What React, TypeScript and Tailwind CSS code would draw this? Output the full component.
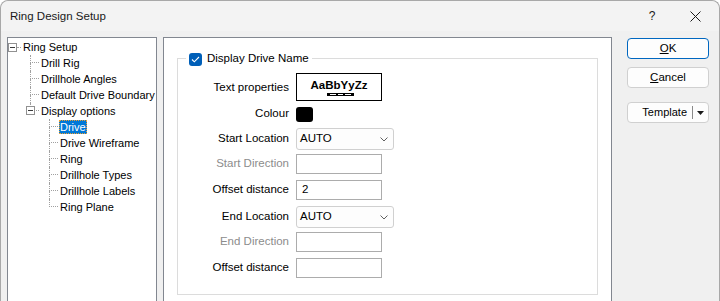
import React from "react";

type TreeItem = { label: string; level: number; last?: boolean; expander?: boolean; selected?: boolean };

const items: TreeItem[] = [
  { label: "Drill Rig", level: 1 },
  { label: "Drillhole Angles", level: 1 },
  { label: "Default Drive Boundary", level: 1 },
  { label: "Display options", level: 1, last: true, expander: true },
  { label: "Drive", level: 2, selected: true },
  { label: "Drive Wireframe", level: 2 },
  { label: "Ring", level: 2 },
  { label: "Drillhole Types", level: 2 },
  { label: "Drillhole Labels", level: 2 },
  { label: "Ring Plane", level: 2, last: true },
];

function Expander() {
  return (
    <div className="w-[9px] h-[9px] border border-[#919191] bg-white flex items-center justify-center">
      <div className="w-[5px] h-px bg-[#3a3a3a]" />
    </div>
  );
}

function TreeRow({ item }: { item: TreeItem }) {
  const spacer = item.level === 1 ? "w-[22px]" : "w-[41px]";
  return (
    <div className="flex h-[16px] items-stretch whitespace-nowrap">
      <div className={spacer + " shrink-0"} />
      <div className="relative w-[9px] shrink-0 flex flex-col">
        <div className="h-[8px] border-l border-b border-dotted border-[#a0a0a0]" />
        <div className={"h-[8px] " + (item.last ? "" : "border-l border-dotted border-[#a0a0a0]")} />
        {item.expander && (
          <div className="absolute left-[-4px] top-[3px]">
            <Expander />
          </div>
        )}
      </div>
      <div className="flex items-center shrink-0">
        <span
          className={
            "leading-[14px] px-[1px] ml-[1px] whitespace-nowrap " +
            (item.selected
              ? "bg-[#0078d7] text-white outline outline-1 outline-dotted outline-[#f0a030] -outline-offset-1"
              : "")
          }
        >
          {item.label}
        </span>
      </div>
    </div>
  );
}

function Label({ children, disabled }: { children: React.ReactNode; disabled?: boolean }) {
  return (
    <div className={"w-[111px] shrink-0 text-right whitespace-nowrap " + (disabled ? "text-[#8c8c8c]" : "text-black")}>
      {children}
    </div>
  );
}

function Chevron() {
  return (
    <svg width="8" height="5" viewBox="0 0 8 5" className="shrink-0">
      <path d="M0.5 0.5 L4 4 L7.5 0.5" fill="none" stroke="#606060" strokeWidth="1" />
    </svg>
  );
}

function InputRow({ label, value, disabled }: { label: string; value?: string; disabled?: boolean }) {
  return (
    <div className="flex h-[26px] items-start pt-[2px]">
      <div className="flex h-[20px] items-center">
        <Label disabled={disabled}>{label}</Label>
      </div>
      <div className="ml-[7px] w-[86px] h-[20px] border border-[#acacac] bg-white flex items-center pl-[5px]">
        {value}
      </div>
    </div>
  );
}

function SelectRow({ label, value }: { label: string; value: string }) {
  return (
    <div className="flex h-[26px] items-start pt-[2px]">
      <div className="flex h-[22px] items-center">
        <Label>{label}</Label>
      </div>
      <div className="ml-[7px] w-[98px] h-[22px] border border-[#d0d0d0] rounded-[3px] bg-[#fdfdfd] flex items-center pl-[3px] pr-[5px] justify-between">
        <span>{value}</span>
        <Chevron />
      </div>
    </div>
  );
}

export default function App() {
  return (
    <div className="w-[720px] h-[301px] overflow-hidden bg-[#f0f0f0] border border-b-0 border-[#a8a8a8] rounded-t-[8px] text-black text-[11.5px] font-['Liberation_Sans',Arial,sans-serif]">
      {/* Title bar */}
      <div className="h-[30px] flex items-center bg-[#f3f3f3] rounded-t-[8px]">
        <div className="pl-[9px] text-[11.5px] text-[#1a1a1a] mt-[1px]">Ring Design Setup</div>
        <div className="ml-auto flex items-center">
          <div className="w-[20px] text-center text-[12px] text-[#1a1a1a] mr-[28px]">?</div>
          <svg width="11" height="11" viewBox="0 0 11 11" className="mr-[18px]">
            <path d="M0.5 0.5 L10.5 10.5 M10.5 0.5 L0.5 10.5" stroke="#1a1a1a" strokeWidth="1" />
          </svg>
        </div>
      </div>

      {/* Body */}
      <div className="flex pt-[6px] pl-[6px]">
        {/* Tree */}
        <div className="w-[150px] h-[280px] shrink-0 border border-[#828790] bg-white overflow-hidden pt-[1px] text-[11px]">
          <div className="flex h-[16px] items-center whitespace-nowrap">
            <Expander />
            <div className="w-[4px] border-b border-dotted border-[#a0a0a0]" />
            <span className="ml-[1px] leading-[14px] px-[1px]">Ring Setup</span>
          </div>
          {items.map((it) => (
            <TreeRow key={it.label} item={it} />
          ))}
        </div>

        {/* Main panel */}
        <div className="ml-[6px] w-[449px] h-[280px] shrink-0 border border-[#828790] bg-white">
          <div className="relative mt-[20px] mx-[13px] h-[237px] border border-[#dcdcdc] pt-[13px]">
            <div className="absolute -top-[8px] left-[8px] bg-white px-[3px] h-[16px] flex items-center whitespace-nowrap">
              <div className="w-[13px] h-[13px] rounded-[3px] bg-[#005fb8] flex items-center justify-center">
                <svg width="9" height="7" viewBox="0 0 9 7">
                  <path d="M1 3.5 L3.3 5.8 L8 1" fill="none" stroke="white" strokeWidth="1.1" />
                </svg>
              </div>
              <span className="ml-[5px]">Display Drive Name</span>
            </div>

            {/* Text properties */}
            <div className="flex h-[30px] items-start">
              <div className="flex h-[29px] items-center mt-[1px]">
                <Label>Text properties</Label>
              </div>
              <div className="ml-[7px] mt-[1px] w-[86px] h-[28px] border border-black bg-white flex flex-col items-center justify-center">
                <span className="font-bold text-[11.5px] leading-[13px] mt-[1px]">AaBbYyZz</span>
                <svg width="27" height="3" viewBox="0 0 27 3" className="mt-[1px] ml-[2px]">
                  <rect x="0" y="0" width="27" height="3" fill="black" />
                  <rect x="3" y="1" width="6" height="1" fill="white" />
                  <rect x="11" y="1" width="5" height="1" fill="white" />
                  <rect x="18" y="1" width="6" height="1" fill="white" />
                </svg>
              </div>
            </div>

            {/* Colour */}
            <div className="flex h-[24px] items-center">
              <Label>Colour</Label>
              <div className="ml-[7px] w-[17px] h-[15px] rounded-[3px] bg-black" />
            </div>

            <SelectRow label="Start Location" value="AUTO" />
            <InputRow label="Start Direction" disabled />
            <InputRow label="Offset distance" value="2" />
            <SelectRow label="End Location" value="AUTO" />
            <InputRow label="End Direction" disabled />
            <InputRow label="Offset distance" />
          </div>
        </div>

        {/* Buttons */}
        <div className="ml-[15px] w-[82px] shrink-0 flex flex-col pt-[1px]">
          <div className="h-[21px] rounded-[4px] border border-[#0067c0] bg-[#fdfdfd] flex items-center justify-center">
            <span>
              <u>O</u>K
            </span>
          </div>
          <div className="mt-[8px] h-[21px] rounded-[4px] border border-[#d0d0d0] bg-[#fdfdfd] flex items-center justify-center">
            <span>
              <u>C</u>ancel
            </span>
          </div>
          <div className="mt-[14px] h-[21px] rounded-[4px] border border-[#d0d0d0] bg-[#fdfdfd] flex items-center whitespace-nowrap">
            <div className="w-[64px] shrink-0 text-right pr-[5px] text-[11px]">Template</div>
            <div className="w-px h-[13px] bg-[#8a8a8a] shrink-0" />
            <div className="flex-1 flex justify-center">
              <svg width="7" height="4" viewBox="0 0 7 4">
                <path d="M0 0 L7 0 L3.5 4 Z" fill="#1a1a1a" />
              </svg>
            </div>
          </div>
        </div>
      </div>
    </div>
  );
}
